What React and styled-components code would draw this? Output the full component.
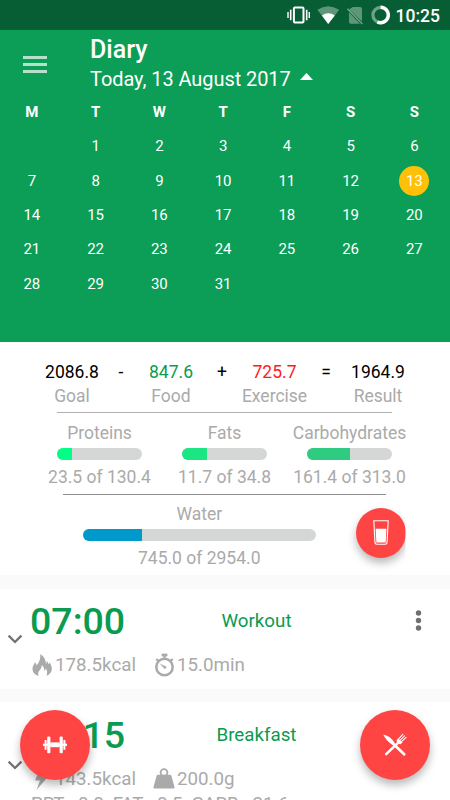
import styled, { createGlobalStyle } from 'styled-components';

const GlobalStyle = createGlobalStyle`
  * {
    box-sizing: border-box;
  }
  body {
    margin: 0;
    background: #fafafa;
    font-family: Roboto, 'Liberation Sans', sans-serif;
    overflow: hidden;
  }
  svg {
    display: block;
    flex: none;
  }
`;

const Screen = styled.main`
  position: relative;
  width: 450px;
  height: 800px;
  overflow: hidden;
`;

const StatusBar = styled.div`
  display: flex;
  justify-content: flex-end;
  align-items: center;
  height: 30px;
  padding-right: 10px;
  background: #085e34;
  color: #fff;
`;

const Clock = styled.span`
  margin-left: 6px;
  font-size: 17.5px;
  font-weight: 500;
  line-height: 28px;
  padding-top: 2px;
`;

const Header = styled.header`
  height: 312px;
  background: #0c9d57;
  color: #fff;
`;

const TitleBar = styled.div`
  display: flex;
  padding: 5px 0 0 23px;
  height: 65px;
`;

const MenuButton = styled.div`
  display: flex;
  flex-direction: column;
  gap: 4px;
  width: 24px;
  margin: 21px 43px 0 0;
`;

const MenuLine = styled.span`
  height: 3px;
  background: #b5e0cb;
`;

const Title = styled.h1`
  margin: 0;
  font-size: 25px;
  font-weight: 500;
  line-height: 29px;
`;

const DateRow = styled.div`
  display: flex;
  align-items: center;
  gap: 9px;
  font-size: 20px;
  letter-spacing: -0.07px;
  line-height: 31px;
`;

const Calendar = styled.div`
  display: grid;
  grid-template-columns: repeat(7, 63.75px);
  grid-auto-rows: 34.3px;
`;

const Day = styled.div`
  display: flex;
  align-items: center;
  justify-content: center;
  font-size: 15px;
  font-weight: ${({ $head }) => ($head ? 700 : 400)};
`;

const Selected = styled.span`
  display: flex;
  align-items: center;
  justify-content: center;
  width: 30px;
  height: 30px;
  border-radius: 50%;
  background: #ffc107;
`;

const Summary = styled.section`
  height: 233px;
  padding-top: 18px;
  background: #fff;
  font-size: 17.5px;
  color: #aaa;
`;

const Equation = styled.div`
  display: grid;
  grid-template-columns: 60px 38px 62px 40px 65px 38px 66px;
  padding-left: 42px;
  height: 52px;
  line-height: 24px;
  text-align: center;
  white-space: nowrap;
`;

const Term = styled.div`
  display: flex;
  flex-direction: column;
  align-items: center;
`;

const Amount = styled.span`
  color: ${({ $color }) => $color || '#000'};
`;

const Divider = styled.div`
  width: ${({ $width }) => $width}px;
  height: 1px;
  margin-left: ${({ $left }) => $left}px;
  background: ${({ $color }) => $color};
`;

const Nutrients = styled.div`
  display: flex;
  height: 81px;
  padding: 7px 0 0 37px;
`;

const Meter = styled.div`
  display: flex;
  flex-direction: column;
  align-items: center;
  width: ${({ $width }) => $width}px;
  line-height: 26px;
  white-space: nowrap;
`;

const Track = styled.div`
  width: ${({ $width }) => $width}px;
  height: 12.5px;
  margin: 1.5px 0 4px;
  border-radius: 7px;
  background: #d5d7d6;
  overflow: hidden;
`;

const Fill = styled.div`
  height: 100%;
  background: ${({ $color }) => $color};
`;

const Water = styled.div`
  display: flex;
  padding: 6px 0 0 83px;
`;

const Fab = styled.div`
  display: flex;
  align-items: center;
  justify-content: center;
  width: ${({ $size }) => $size}px;
  height: ${({ $size }) => $size}px;
  border-radius: 50%;
  background: #ff4444;
  box-shadow: 0 5px 9px rgba(0, 0, 0, 0.28);
`;

const WaterFab = styled.div`
  margin: 6.5px 0 0 40px;
  clip-path: inset(-20px 0 -30px -20px);
`;

const FloatingFab = styled(Fab)`
  position: absolute;
  top: 710px;
  left: ${({ $left }) => $left}px;
`;

const Entry = styled.article`
  display: flex;
  height: ${({ $height }) => $height}px;
  margin-top: ${({ $gap }) => $gap}px;
  background: #fff;
`;

const Expander = styled.div`
  display: flex;
  align-items: center;
  width: 30px;
  padding-left: 7px;
`;

const EntryBody = styled.div`
  flex: 1;
  padding-top: ${({ $top }) => $top}px;
`;

const EntryHead = styled.div`
  display: flex;
  align-items: center;
  height: 44px;
  color: #0a9b50;
`;

const Time = styled.span`
  width: 95px;
  font-size: 37.5px;
  font-weight: 500;
`;

const Name = styled.span`
  width: 263px;
  font-size: 18.75px;
  text-align: center;
`;

const MoreIcon = styled.svg`
  margin-left: 27px;
`;

const Details = styled.div`
  display: flex;
  align-items: center;
  height: 24px;
  margin-top: 10px;
  font-size: 18.75px;
  color: #aaa;
`;

const Detail = styled.span`
  display: flex;
  align-items: center;
  gap: 2px;
  width: ${({ $width }) => $width}px;
`;

const Macros = styled.div`
  font-size: 18.75px;
  letter-spacing: -0.15px;
  line-height: 27px;
  padding-left: 1px;
  white-space: pre;
  color: #aaa;
`;

const weekdays = ['M', 'T', 'W', 'T', 'F', 'S', 'S'];
const days = [null, ...Array.from({ length: 31 }, (_, i) => i + 1)];

const nutrients = [
  { name: 'Proteins', value: '23.5', goal: '130.4', fill: 15, color: '#00ff86' },
  { name: 'Fats', value: '11.7', goal: '34.8', fill: 25, color: '#1be683' },
  { name: 'Carbohydrates', value: '161.4', goal: '313.0', fill: 43, color: '#2ecb80' },
];

const StatusIcons = () => (
  <svg width="104" height="22" viewBox="286 4 104 22" fill="none">
    <rect x="293.9" y="7.6" width="9.6" height="15" rx="1" stroke="#fff" strokeWidth="2" />
    <path d="M290.7 9.8v10.4M306.7 9.8v10.4" stroke="#fff" strokeWidth="1.6" />
    <path d="M288 12v6M309.3 12v6" stroke="#fff" strokeWidth="1.4" />
    <path d="M317.4 9.8Q328 2.6 339.2 9.8L328.2 24z" fill="#fff" fillOpacity=".35" />
    <path d="M321.9 15.5Q328.3 11 334.8 15.5L328.2 24z" fill="#fff" />
    <path d="M352.8 7h7.4q1.8 0 1.8 1.8v12.6L349 9.6z" fill="#fff" fillOpacity=".35" />
    <path d="M349 12.3L360 23.8h-9.4q-1.6 0-1.6-1.8z" fill="#fff" fillOpacity=".35" />
    <path d="M347.4 8.8L362.4 24" stroke="#74a78c" strokeWidth="1.3" />
    <circle cx="380.6" cy="15" r="7.7" stroke="#6fa186" strokeWidth="3.2" />
    <path d="M380.6 7.3a7.7 7.7 0 1 1-3.2 14.7" stroke="#fff" strokeWidth="3.4" />
  </svg>
);

const GlassIcon = () => (
  <svg width="16" height="25" viewBox="0 0 16 25" fill="none">
    <path d="M.8.8h14.4L14 22.6q-.1 1.6-1.8 1.6H3.8q-1.7 0-1.8-1.6z" stroke="#fff" strokeWidth="1.1" />
    <path d="M2.6 8.8h10.8l-.7 13.6H3.4z" fill="#fff" />
  </svg>
);

const ChevronIcon = () => (
  <svg width="16" height="10" viewBox="0 0 16 10" fill="none">
    <path d="M1.6 1.6L8 8l6.4-6.4" stroke="#707070" strokeWidth="2.2" />
  </svg>
);

const FlameIcon = () => (
  <svg width="23" height="24" viewBox="0 0 23 24" fill="#aaa">
    <path d="M8.6 23C4.2 21.4 1.6 18.4 2.8 13.8c.5-1.700 1.700-2.800 2-4.600 1.200.9 1.700 2 1.700 3.300C9.600 9 10.600 5.600 10.300 1c3.800 2.400 5.500 5.900 5.700 9.700.6-.7.9-1.600.8-2.800 1 1 1.500 2.200 1.700 3.400.7-.6 1-1.300 1.100-2.100 3.600 5.700 3.100 11-3.200 13.800 1.200-3.200.9-5.600-.8-7.400-.1 1.300-.5 2.100-1.100 2.700-.1-2.900-.9-4.700-2.700-6.300 0 3.300-1.700 4.400-2.900 6.200-1 1.500-1 2.900-.3 4.800z" />
  </svg>
);

const StopwatchIcon = () => (
  <svg width="21" height="24" viewBox="0 0 21 24" fill="none" stroke="#aaa">
    <circle cx="10.5" cy="14" r="8.2" strokeWidth="2.5" />
    <path d="M7.6 2h5.8" strokeWidth="2.8" />
    <path d="M10.5 2v5M2.3 6.1l2.6 2.1M16.2 8.1l2.6-2.1" strokeWidth="2.2" />
    <path d="M5.6 10.6l7 3.2-1.6 2.4z" fill="#aaa" stroke="none" />
  </svg>
);

const BoltIcon = () => (
  <svg width="23" height="24" viewBox="0 0 23 24" fill="#aaa">
    <path d="M10 1h7l-2.5 7.5H19L6.5 23l3.5-9.5H5z" />
  </svg>
);

const WeightIcon = () => (
  <svg width="22" height="24" viewBox="0 0 22 24">
    <circle cx="11" cy="5.5" r="3.4" fill="none" stroke="#aaa" strokeWidth="1.8" />
    <path d="M4.8 7.8h12.4q1 0 1.2 1L21.5 20q.3 1.6-1.2 1.6H1.7Q.2 21.6.5 20L3.6 8.8q.2-1 1.2-1z" fill="#aaa" />
  </svg>
);

const DumbbellIcon = () => (
  <svg width="24" height="18" viewBox="0 0 24 18" fill="#fff">
    <rect x="0" y="7.7" width="24" height="2.2" />
    <rect x="1.6" y="4" width="2" height="9.8" rx=".6" />
    <rect x="4.2" y=".6" width="3.2" height="16.6" rx="1" />
    <rect x="7.4" y="6.4" width="9.2" height="4.8" />
    <rect x="16.6" y=".6" width="3.2" height="16.6" rx="1" />
    <rect x="20.4" y="4" width="2" height="9.8" rx=".6" />
  </svg>
);

const CutleryIcon = () => (
  <svg width="26" height="24" viewBox="0 0 26 24" fill="none" stroke="#fff" strokeLinecap="round">
    <path d="M1.2 1.6C5.5 2.5 9.5 5 12.5 9.5l-2.2 2.2C6.6 9.4 3 6 1.2 1.6z" fill="#fff" stroke="none" />
    <path d="M11 10.5L22.2 21.2" strokeWidth="2.7" />
    <path d="M4.2 21.2L17 8.8" strokeWidth="2.5" />
    <path d="M14.6 7.6c.2 2.2 1.6 3.6 3.9 3.7l2-1.7-4.3-4z" fill="#fff" stroke="none" />
    <path d="M16 6.6L20.8 1.4M17.4 7.9L22.5 2.8M18.8 9.3L24 4.4" strokeWidth="1.1" />
  </svg>
);

const Progress = ({ width, trackWidth, name, value, goal, fill, color }) => (
  <Meter $width={width}>
    {name}
    <Track $width={trackWidth}>
      <Fill $color={color} style={{ width: fill }} />
    </Track>
    {value} of {goal}
  </Meter>
);

const App = () => (
  <Screen>
    <GlobalStyle />
    <StatusBar>
      <StatusIcons />
      <Clock>10:25</Clock>
    </StatusBar>

    <Header>
      <TitleBar>
        <MenuButton>
          <MenuLine />
          <MenuLine />
          <MenuLine />
        </MenuButton>
        <div>
          <Title>Diary</Title>
          <DateRow>
            Today, 13 August 2017
            <svg width="13" height="13" viewBox="0 0 13 13" fill="#fff">
              <path d="M0 7L6.5 0 13 7z" />
            </svg>
          </DateRow>
        </div>
      </TitleBar>
      <Calendar>
        {weekdays.map((day, i) => (
          <Day key={i} $head>
            {day}
          </Day>
        ))}
        {days.map((day, i) => (
          <Day key={i}>{day === 13 ? <Selected>{day}</Selected> : day}</Day>
        ))}
      </Calendar>
    </Header>

    <Summary>
      <Equation>
        <Term>
          <Amount>2086.8</Amount>Goal
        </Term>
        <Amount>-</Amount>
        <Term>
          <Amount $color="#0a9b50">847.6</Amount>Food
        </Term>
        <Amount>+</Amount>
        <Term>
          <Amount $color="#ff1a1a">725.7</Amount>Exercise
        </Term>
        <Amount>=</Amount>
        <Term>
          <Amount>1964.9</Amount>Result
        </Term>
      </Equation>
      <Divider $left={57} $width={335} $color="#b0b0b0" />
      <Nutrients>
        {nutrients.map((item) => (
          <Progress key={item.name} width={125} trackWidth={85} {...item} />
        ))}
      </Nutrients>
      <Divider $left={63} $width={323} $color="#8f8f8f" />
      <Water>
        <Progress
          width={232.5}
          trackWidth={232.5}
          name="Water"
          value="745.0"
          goal="2954.0"
          fill={59}
          color="#0099cc"
        />
        <WaterFab>
          <Fab $size={50}>
            <GlassIcon />
          </Fab>
        </WaterFab>
      </Water>
    </Summary>

    <Entry $height={100} $gap={14}>
      <Expander>
        <ChevronIcon />
      </Expander>
      <EntryBody $top={10}>
        <EntryHead>
          <Time>07:00</Time>
          <Name>Workout</Name>
          <MoreIcon width="7" height="22" viewBox="0 0 7 22" fill="#707070">
            <circle cx="3.5" cy="3" r="2.7" />
            <circle cx="3.5" cy="10.5" r="2.7" />
            <circle cx="3.5" cy="18" r="2.7" />
          </MoreIcon>
        </EntryHead>
        <Details>
          <Detail $width={124}>
            <FlameIcon />
            178.5kcal
          </Detail>
          <Detail>
            <StopwatchIcon />
            15.0min
          </Detail>
        </Details>
      </EntryBody>
    </Entry>

    <Entry $height={126} $gap={13}>
      <Expander>
        <ChevronIcon />
      </Expander>
      <EntryBody $top={11}>
        <EntryHead>
          <Time>09:15</Time>
          <Name>Breakfast</Name>
        </EntryHead>
        <Details>
          <Detail $width={123}>
            <BoltIcon />
            143.5kcal
          </Detail>
          <Detail>
            <WeightIcon />
            200.0g
          </Detail>
        </Details>
        <Macros>PRT - 0.0  FAT - 0.5  CARB - 21.6</Macros>
      </EntryBody>
    </Entry>

    <FloatingFab $size={70} $left={20}>
      <DumbbellIcon />
    </FloatingFab>
    <FloatingFab $size={70} $left={360}>
      <CutleryIcon />
    </FloatingFab>
  </Screen>
);

export default App;
